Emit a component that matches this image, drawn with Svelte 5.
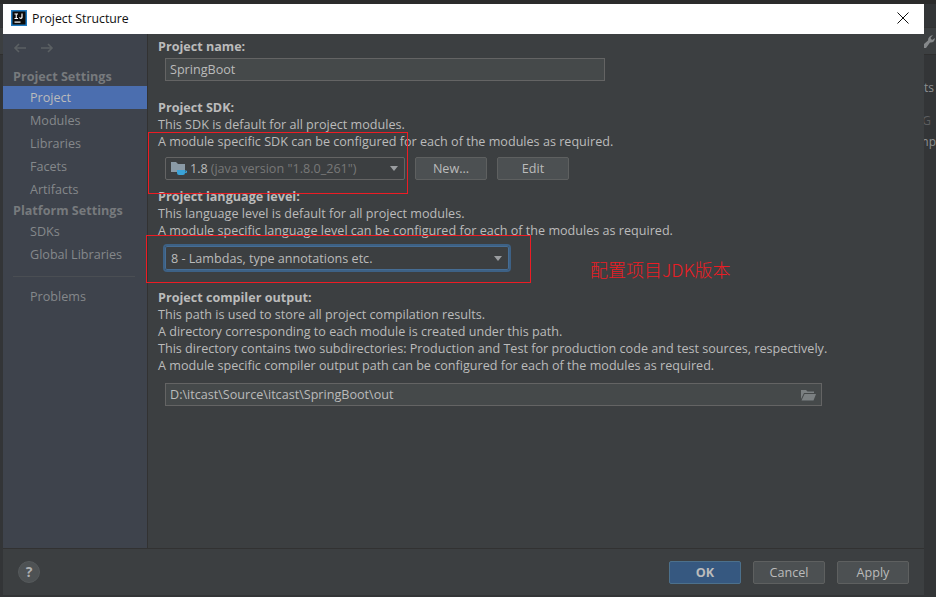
<script>
  const sidebarGroups = [
    { title: 'Project Settings', items: ['Project', 'Modules', 'Libraries', 'Facets', 'Artifacts'] },
    { title: 'Platform Settings', items: ['SDKs', 'Global Libraries'] }
  ];
  const selected = 'Project';
</script>

<div class="desktop">
  <div class="backdrop">
    <div class="band top"></div>
    <div class="band tool">
      <svg class="wrench" width="12" height="15" viewBox="0 0 12 15"><path d="M1 14 L1 10 L5 6.500 Q5 2 10 1 L7.500 4 L9 6 L12 4 Q11.500 9 7 8.500 L3 14 Z" fill="#85888a"/></svg>
    </div>
    <span class="peek one">ts</span>
    <span class="peek three">G</span>
    <span class="peek two">mp</span>
  </div>

  <div class="window">
    <header class="titlebar">
      <svg class="logo" width="16" height="16" viewBox="0 0 16 16">
        <rect x="0.750" y="0.750" width="14.500" height="14.500" fill="#0b0b0b" stroke="#1f7ac0" stroke-width="1.500"/>
        <rect x="3.500" y="11.500" width="6" height="1.200" fill="#fff"/>
        <path d="M3.500 3.500h3.500v1H5.800v3.600H7v1H3.500v-1h1.200V4.500H3.500zM8 7.600l.9-.3c.3.7 1.500.7 1.500-.3V3.500h1.200V7.200c0 2.100-3 2.300-3.600.4z" fill="#fff"/>
      </svg>
      <span class="title">Project Structure</span>
      <svg class="close" width="12" height="12" viewBox="0 0 12 12"><path d="M.5.5l11 11M11.500.5l-11 11" stroke="#111" stroke-width="1" fill="none"/></svg>
    </header>

    <div class="body">
      <nav class="sidebar">
        <div class="arrows">
          <svg width="14" height="12" viewBox="0 0 14 12"><path d="M13 6H2M6 2L2 6l4 4" stroke="#5b6063" stroke-width="1.600" fill="none"/></svg>
          <svg width="14" height="12" viewBox="0 0 14 12"><path d="M1 6h11M8 2l4 4-4 4" stroke="#5b6063" stroke-width="1.600" fill="none"/></svg>
        </div>
        {#each sidebarGroups as group}
          <div class="group-title">{group.title}</div>
          {#each group.items as item}
            <div class="item" class:active={item === selected}>{item}</div>
          {/each}
        {/each}
        <div class="divider"></div>
        <div class="item">Problems</div>
      </nav>

      <main class="content">
        <div class="heading">Project name:</div>
        <div class="field name-field">SpringBoot</div>

        <div class="heading sdk-heading">Project SDK:</div>
        <p>This SDK is default for all project modules.</p>
        <p>A module specific SDK can be configured for each of the modules as required.</p>
        <div class="sdk-row">
          <div class="field combo sdk-combo">
            <svg class="folder" width="16" height="15" viewBox="0 0 16 15">
              <path d="M0 1h5l2 2h7v8H0z" fill="#8a9aa6"/>
              <path d="M6 9h8v3a2 2 0 0 1-2 2H8a2 2 0 0 1-2-2z" fill="#3aa3d8"/>
              <path d="M14 10h1.500v1.600H14" fill="none" stroke="#3aa3d8"/>
            </svg>
            <span class="version">1.8</span>
            <span class="dim">(java version "1.8.0_261")</span>
            <span class="caret"></span>
          </div>
          <button class="btn">New...</button>
          <button class="btn">Edit</button>
        </div>

        <div class="heading level-heading">Project language level:</div>
        <p>This language level is default for all project modules.</p>
        <p>A module specific language level can be configured for each of the modules as required.</p>
        <div class="field combo level-combo">
          <span>8 - Lambdas, type annotations etc.</span>
          <span class="caret"></span>
        </div>

        <div class="heading output-heading">Project compiler output:</div>
        <p>This path is used to store all project compilation results.</p>
        <p>A directory corresponding to each module is created under this path.</p>
        <p>This directory contains two subdirectories: Production and Test for production code and test sources, respectively.</p>
        <p>A module specific compiler output path can be configured for each of the modules as required.</p>
        <div class="field output-field">
          <span>D:\itcast\Source\itcast\SpringBoot\out</span>
          <svg class="browse" width="15" height="12" viewBox="0 0 15 12">
            <path d="M0 1h5l1.500 1.500H13V4H3L0 10z" fill="#7b8082"/>
            <path d="M3.500 5H15l-2.500 6.500H0.500z" fill="#7b8082"/>
          </svg>
        </div>
      </main>
    </div>

    <footer class="footer">
      <div class="help">?</div>
      <div class="actions">
        <button class="btn primary">OK</button>
        <button class="btn">Cancel</button>
        <button class="btn">Apply</button>
      </div>
    </footer>
  </div>

  <!-- hand-drawn annotations on top of the screenshot -->
  <div class="mark mark-sdk"></div>
  <div class="mark mark-level"></div>
  <div class="note">配置项目JDK版本</div>
</div>

<style>
  :global(body) {
    margin: 0;
    background: #333537;
  }

  .desktop {
    position: relative;
    width: 936px;
    height: 597px;
    overflow: hidden;
    padding: 4px 12px 2px 3px;
    box-sizing: border-box;
    font-family: "Open Sans", "Noto Sans", sans-serif;
    font-size: 12.600px;
    color: #bbbbbb;
    background: #333537;
  }

  .backdrop {
    position: absolute;
    inset: 0;
    color: #8d8f90;
  }

  .band.top {
    height: 4px;
    background: #2b2b2b;
  }

  .band.tool {
    position: absolute;
    top: 27px;
    left: 0;
    right: 0;
    height: 28px;
    box-sizing: border-box;
    background: #3c3f41;
    border-top: 1px solid #323232;
    border-bottom: 1px solid #2f2f2f;
  }

  .wrench {
    position: absolute;
    top: 6px;
    right: 1px;
  }

  .peek {
    position: absolute;
    right: 2px;
    font-size: 12px;
    line-height: 16px;
  }

  .peek.one { top: 80px; }
  .peek.three { top: 113px; right: 5px; color: #5c5e60; }
  .peek.two { top: 134px; right: 0; }

  .window {
    position: relative;
    height: 100%;
    display: flex;
    flex-direction: column;
    background: #3c3f41;
  }

  .titlebar {
    height: 30px;
    flex: none;
    display: flex;
    align-items: center;
    padding: 0 15px 2px 8px;
    box-sizing: border-box;
    background: #fff;
    color: #111;
    font-size: 12.300px;
  }

  .title { margin-left: 5px; }
  .close { margin-left: auto; }

  .body {
    flex: 1;
    display: flex;
    min-height: 0;
  }

  .sidebar {
    width: 144px;
    flex: none;
    background: #3e434c;
    border-right: 1px solid #323232;
    box-sizing: content-box;
    color: #85888b;
  }

  .arrows {
    display: flex;
    gap: 13px;
    height: 32px;
    padding: 8px 0 0 10px;
    box-sizing: border-box;
  }

  .group-title {
    height: 20px;
    line-height: 22px;
    padding-left: 10px;
    font-weight: 700;
    color: #777a7d;
  }

  .item + .group-title { margin-top: -1px; }

  .item {
    height: 23px;
    line-height: 23px;
    padding-left: 27px;
  }

  .item.active {
    background: #4b6eaf;
    color: #bbbbbb;
  }

  .divider {
    height: 1px;
    margin: 10px 12px 8px 10px;
    background: #4a4e53;
  }

  .content {
    flex: 1;
    padding: 4px 0 0 10px;
    min-width: 0;
  }

  .heading {
    display: block;
    font-weight: 700;
    line-height: 17px;
  }

  p {
    margin: 0;
    line-height: 17px;
    white-space: nowrap;
  }

  .field {
    box-sizing: border-box;
    border: 1px solid #646464;
    background: #45494a;
    height: 23px;
    line-height: 21px;
    padding: 0 5px 0 4px;
    white-space: nowrap;
  }

  .name-field {
    width: 440px;
    margin: 3px 0 0 7px;
  }

  .sdk-heading { margin-top: 18px; }

  .sdk-row {
    display: flex;
    gap: 10px;
    margin: 7px 0 0 7px;
  }

  .combo {
    display: flex;
    align-items: center;
    background: #3c3f41;
    border-radius: 2px;
  }

  .sdk-combo {
    width: 240px;
    gap: 3px;
    color: #bbbbbb;
    padding-left: 5px;
  }

  .folder { flex: none; }
  .dim { color: #787878; }

  .caret {
    margin-left: auto;
    margin-right: 1px;
    width: 0;
    height: 0;
    border-left: 4.500px solid transparent;
    border-right: 4.500px solid transparent;
    border-top: 5px solid #9a9da0;
  }

  .btn {
    box-sizing: border-box;
    width: 72px;
    height: 23px;
    padding: 0;
    border: 1px solid #5e6060;
    border-radius: 2px;
    background: #4c5052;
    color: #bbbbbb;
    font: inherit;
  }

  .level-heading { margin-top: 8px; }

  .level-combo {
    width: 344px;
    height: 24px;
    margin: 7px 0 0 7px;
    padding-left: 5px;
    border-color: #466d94;
    outline: 2px solid #3d6185;
    outline-offset: 0;
    border-radius: 2px;
  }

  .output-heading { margin-top: 19px; }

  .output-field {
    width: 657px;
    margin: 9px 0 0 7px;
    display: flex;
    align-items: center;
    justify-content: space-between;
  }

  .footer {
    flex: none;
    height: 47px;
    box-sizing: border-box;
    border-top: 1px solid #323232;
    display: flex;
    align-items: center;
    padding: 0 15px 0 15px;
  }

  .help {
    width: 22px;
    height: 22px;
    border-radius: 50%;
    background: #4e5254;
    border: 1px solid #55595b;
    box-sizing: border-box;
    text-align: center;
    line-height: 20px;
    font-weight: 700;
    font-size: 14px;
    color: #aeb0b2;
  }

  .actions {
    margin-left: auto;
    display: flex;
    gap: 12px;
  }

  .primary {
    background: #365880;
    border-color: #4c708c;
    font-weight: 700;
  }

  .mark {
    position: absolute;
    box-sizing: border-box;
    border: 1px solid #ed1c24;
  }

  .mark-sdk {
    left: 148px;
    top: 132px;
    width: 260px;
    height: 62px;
  }

  .mark-level {
    left: 146px;
    top: 235px;
    width: 385px;
    height: 48px;
  }

  .note {
    position: absolute;
    left: 590px;
    top: 257px;
    font-family: "Noto Sans CJK SC", sans-serif;
    font-size: 18px;
    font-weight: 300;
    line-height: 24px;
    color: #ed1c24;
  }
</style>
